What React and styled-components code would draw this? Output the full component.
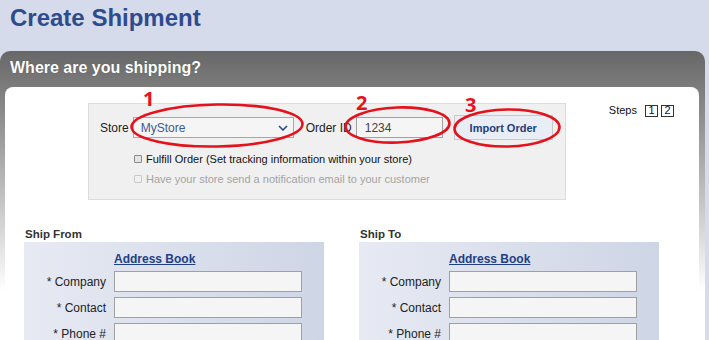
import React from "react";
import styled, { createGlobalStyle } from "styled-components";

const GlobalStyle = createGlobalStyle`
    body {
        margin: 0;
        background-color: #d5dbea;
        font-family: "Liberation Sans", Arial, sans-serif;
        overflow: hidden;
    }
`

const Page = styled.div`
    position: relative;
    width: 709px;
    height: 340px;
    overflow: hidden;
`

const Title = styled.h1`
    margin: 0;
    height: 51px;
    box-sizing: border-box;
    padding: 3px 0 0 10px;
    font-size: 24px;
    line-height: 30px;
    font-weight: bold;
    color: #2d4b8d;
`

const Panel = styled.div`
    margin-right: 4px;
    padding: 0 6px 0 5px;
    height: 289px;
    border-radius: 10px 10px 0 0;
    background: linear-gradient(to bottom, #676767 0px, #8a8a8a 60px, #c4c4c4 150px, #ffffff 240px);
`

const PanelHeader = styled.div`
    height: 36px;
    box-sizing: border-box;
    padding: 7px 0 0 5px;
    font-size: 16px;
    line-height: 20px;
    font-weight: bold;
    color: #ffffff;
    text-shadow: 0 0 1px rgba(0, 0, 0, 0.4);
`

const PanelBody = styled.div`
    height: 253px;
    background-color: #ffffff;
    border-radius: 8px 8px 0 0;
    padding-top: 16px;
    box-sizing: border-box;
`

const TopRow = styled.div`
    display: flex;
    align-items: flex-start;
    padding: 0 25px 0 83px;
`

const StoreBox = styled.div`
    width: 478px;
    height: 97px;
    box-sizing: border-box;
    padding: 11px 0 0 11px;
    background-color: #f0f0f0;
    border: 1px solid #dcdcdc;
`

const StoreRow = styled.div`
    display: flex;
    align-items: center;
    height: 25px;
    font-size: 12px;
    color: #222;
`

const Label = styled.span`
    margin-right: ${(p) => p.gap || 4}px;
`

const SelectBox = styled.div`
    display: flex;
    align-items: center;
    justify-content: space-between;
    width: 161px;
    height: 21px;
    box-sizing: border-box;
    padding: 0 5px 0 7px;
    border: 1px solid #a8a8a8;
    background-color: #f5f5f5;
    color: #3d5a92;
    font-size: 12px;
    margin-right: 12px;
`

const TextInput = styled.input`
    width: ${(p) => p.w}px;
    height: 21px;
    box-sizing: border-box;
    margin: 0;
    padding: 0 8px;
    border: 1px solid #a0a0a0;
    background-color: #f5f5f5;
    color: #444;
    font-family: inherit;
    font-size: 12px;
    outline: none;
`

const ImportButton = styled.button`
    margin-left: 11px;
    width: 99px;
    height: 25px;
    padding: 0;
    border: 1px solid #c8c8c8;
    background-color: #e9edf6;
    color: #223f7a;
    font-family: inherit;
    font-size: 11px;
    font-weight: bold;
    cursor: pointer;
`

const CheckRow = styled.label`
    display: flex;
    align-items: center;
    height: 20px;
    margin: ${(p) => (p.first ? "9px" : "0")} 0 0 34px;
    font-size: 11px;
    color: ${(p) => (p.disabled ? "#a4a4a4" : "#111")};
`

const CheckBox = styled.input`
    appearance: none;
    width: 8px;
    height: 8px;
    margin: 0 4px 0 0;
    border: 1px solid ${(p) => (p.disabled ? "#c8c8c8" : "#8a8a8a")};
    background-color: ${(p) => (p.disabled ? "#f0f0f0" : "#e4e4e4")};
    border-radius: 1px;
`

const Steps = styled.div`
    display: flex;
    align-items: center;
    margin-left: auto;
    margin-top: 1px;
    font-size: 11px;
    line-height: 13px;
    color: #111;
`

const StepBox = styled.span`
    display: inline-flex;
    align-items: center;
    justify-content: center;
    width: 13px;
    height: 12px;
    box-sizing: border-box;
    border: 1px solid #333;
    margin-left: ${(p) => (p.first ? 8 : 3)}px;
    font-size: 11px;
`

const AddressRow = styled.div`
    display: flex;
    gap: 35px;
    padding: 27px 0 0 19px;
`

const Section = styled.div`
    width: 300px;
`

const SectionTitle = styled.div`
    height: 15px;
    padding-left: 1px;
    font-size: 11.5px;
    line-height: 15px;
    font-weight: bold;
    color: #333;
`

const AddressBox = styled.div`
    display: grid;
    grid-template-columns: 82px 188px;
    column-gap: 8px;
    row-gap: 5px;
    align-items: center;
    padding: 9px 22px 10px 0;
    background: linear-gradient(to right, #e7eaf3, #ced5e5);
`

const BookLink = styled.a`
    grid-column: 2;
    margin-bottom: -1px;
    font-size: 12px;
    line-height: 16px;
    font-weight: bold;
    color: #223f86;
    text-decoration: underline;
`

const FieldLabel = styled.span`
    text-align: right;
    font-size: 12px;
    color: #222;
`

const Annotations = styled.svg`
    position: absolute;
    left: 0;
    top: 0;
    pointer-events: none;
`

const Marker = styled.span`
    position: absolute;
    left: ${(p) => p.x}px;
    top: ${(p) => p.y}px;
    font-family: "Open Sans", "Liberation Sans", sans-serif;
    font-size: 20px;
    line-height: 20px;
    font-weight: bold;
    color: #e8121c;
`

const fields = ["* Company", "* Contact", "* Phone #"];

const AddressSection = ({ title }) => (
    <Section>
        <SectionTitle>{title}</SectionTitle>
        <AddressBox>
            <BookLink href="#">Address Book</BookLink>
            {fields.map((f) => (
                <React.Fragment key={f}>
                    <FieldLabel>{f}</FieldLabel>
                    <TextInput w={188} />
                </React.Fragment>
            ))}
        </AddressBox>
    </Section>
)

const App = () => {
    return (
        <Page>
            <GlobalStyle />
            <Title>Create Shipment</Title>
            <Panel>
                <PanelHeader>Where are you shipping?</PanelHeader>
                <PanelBody>
                    <TopRow>
                        <StoreBox>
                            <StoreRow>
                                <Label>Store</Label>
                                <SelectBox>
                                    MyStore
                                    <svg width="10" height="6" viewBox="0 0 10 6">
                                        <path d="M1 1 L5 5 L9 1" fill="none" stroke="#2a4a8a" strokeWidth="1.6" />
                                    </svg>
                                </SelectBox>
                                <Label gap={4}>Order ID</Label>
                                <TextInput w={87} defaultValue="1234" />
                                <ImportButton>Import Order</ImportButton>
                            </StoreRow>
                            <CheckRow first>
                                <CheckBox type="checkbox" />
                                Fulfill Order (Set tracking information within your store)
                            </CheckRow>
                            <CheckRow disabled>
                                <CheckBox type="checkbox" disabled />
                                Have your store send a notification email to your customer
                            </CheckRow>
                        </StoreBox>
                        <Steps>
                            Steps
                            <StepBox first>1</StepBox>
                            <StepBox>2</StepBox>
                        </Steps>
                    </TopRow>
                    <AddressRow>
                        <AddressSection title="Ship From" />
                        <AddressSection title="Ship To" />
                    </AddressRow>
                </PanelBody>
            </Panel>
            <Annotations width="709" height="340">
                <g fill="none" stroke="#e3121c" strokeWidth="2.6">
                    <ellipse cx="217" cy="125.5" rx="85.5" ry="21" transform="rotate(-1 217 125.5)" />
                    <ellipse cx="397.5" cy="125" rx="52" ry="17.5" transform="rotate(-2 397.5 125)" />
                    <ellipse cx="507" cy="128" rx="52.5" ry="18.5" transform="rotate(-1 507 128)" />
                </g>
            </Annotations>
            <Marker x={143} y={89}>1</Marker>
            <Marker x={356} y={93}>2</Marker>
            <Marker x={465} y={95}>3</Marker>
        </Page>
    )
};

export default App;
